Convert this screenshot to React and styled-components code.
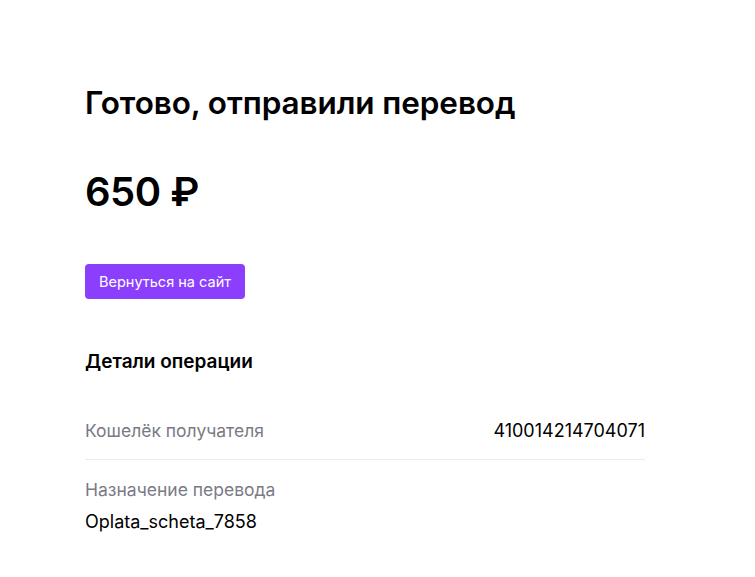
import React from 'react'
import styled, { createGlobalStyle } from 'styled-components'

const GlobalStyle = createGlobalStyle`
  body {
    margin: 0;
    background: #fff;
    font-family: Inter, "Noto Sans", sans-serif;
    color: #000;
  }
`;

const details = [
  { label: 'Кошелёк получателя', value: '410014214704071', inline: true },
  { label: 'Назначение перевода', value: 'Oplata_scheta_7858' },
];

function App() {
  return (
    <>
      <GlobalStyle />
      <Page>
        <Title>Готово, отправили перевод</Title>
        <Amount>650 ₽</Amount>
        <BackButton>Вернуться на сайт</BackButton>
        <SectionTitle>Детали операции</SectionTitle>
        <List>
          {details.map(d => (
            <Row key={d.label} inline={d.inline}>
              <Label>{d.label}</Label>
              <Value>{d.value}</Value>
            </Row>
          ))}
        </List>
      </Page>
    </>
  )
}

const Page = styled.main`
  width: 560px;
  padding: 83px 0 0 85px;
  display: flex;
  flex-direction: column;
  align-items: flex-start;
`;

const Title = styled.h1`
  margin: 0;
  font-size: 31.5px;
  line-height: 40px;
  font-weight: 600;
  letter-spacing: -0.1px;
`;

const Amount = styled.div`
  margin-top: 43px;
  font-size: 40px;
  line-height: 52px;
  font-weight: 600;
  letter-spacing: -0.5px;
`;

const BackButton = styled.button`
  margin-top: 46px;
  height: 35px;
  width: 160px;
  border: none;
  border-radius: 4px;
  background: #8b3ffd;
  color: #fff;
  font: inherit;
  font-size: 14.5px;
  cursor: pointer;
`;

const SectionTitle = styled.h2`
  margin: 51px 0 0;
  font-size: 19px;
  line-height: 24px;
  font-weight: 600;
`;

const List = styled.div`
  margin-top: 46px;
  align-self: stretch;
`;

const Row = styled.div`
  display: flex;
  flex-direction: ${p => (p.inline ? 'row' : 'column')};
  justify-content: space-between;
  gap: ${p => (p.inline ? '0' : '10px')};
  padding: ${p => (p.inline ? '0 0 17px' : '19px 0')};

  & + & {
    border-top: 1px solid #ebebeb;
  }
`;

const Label = styled.span`
  font-size: 17.5px;
  line-height: 22px;
  color: #7a7a85;
`;

const Value = styled.span`
  font-size: 18px;
  line-height: 22px;
  color: #000;
`;

export default App
